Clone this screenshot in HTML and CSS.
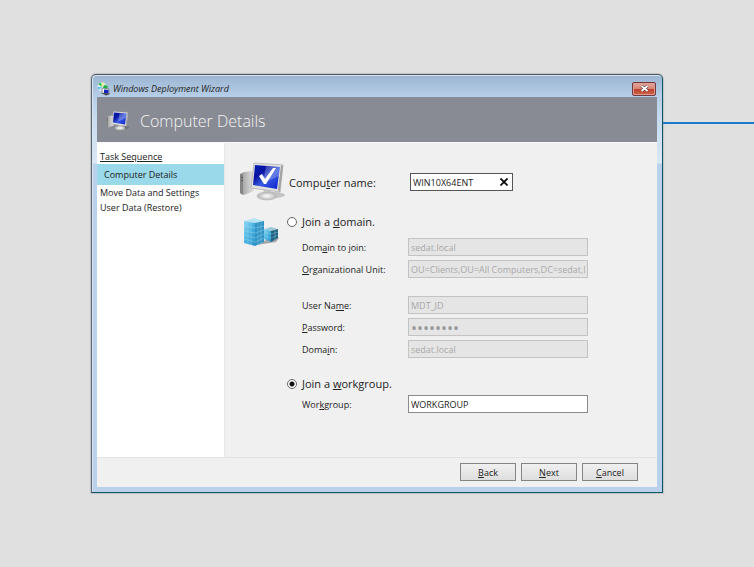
FILE: index.html
```html
<!DOCTYPE html>
<html lang="en">
    <head>
        <meta charset="UTF-8">
        <meta name="viewport" content="width=device-width, initial-scale=1.0">
        <title>Windows Deployment Wizard</title>
        <link rel="stylesheet" href="styles.css">
    </head>
    <body>
        <!-- Shared icon artwork -->
        <svg class="defs" width="0" height="0" aria-hidden="true">
            <defs>
                <linearGradient id="screen" x1="0" y1="0" x2="1" y2="1">
                    <stop offset="0" stop-color="#0a22b8"/>
                    <stop offset="0.3" stop-color="#0713a0"/>
                    <stop offset="0.55" stop-color="#3a5be0"/>
                    <stop offset="1" stop-color="#0a1fd0"/>
                </linearGradient>
                <linearGradient id="tower" x1="0" y1="0" x2="1" y2="0">
                    <stop offset="0" stop-color="#8f8f8f"/>
                    <stop offset="0.35" stop-color="#b4b4b4"/>
                    <stop offset="1" stop-color="#e2e2e2"/>
                </linearGradient>
                <radialGradient id="base">
                    <stop offset="0" stop-color="#ffffff"/>
                    <stop offset="1" stop-color="#b4b4b4"/>
                </radialGradient>
                <linearGradient id="glass" x1="0" y1="0" x2="1" y2="1">
                    <stop offset="0" stop-color="#8fd8f2"/>
                    <stop offset="0.5" stop-color="#47b1e0"/>
                    <stop offset="1" stop-color="#2a93c9"/>
                </linearGradient>
                <symbol id="computer" viewBox="0 0 46 40">
                    <ellipse cx="34" cy="33" rx="11" ry="3" fill="#000" opacity="0.18"/>
                    <path d="M0 12 L4 10 L14 9 V29 L4 33 L0 31 Z" fill="url(#tower)"/>
                    <path d="M0 12 L3 12 V33 L0 31 Z" fill="#858585"/>
                    <path d="M1 15 L3 16 M1 18 L3 19" stroke="#555" stroke-width="1"/>
                    <path d="M24 27 H31 L32 33 H23 Z" fill="#c9c9c9"/>
                    <ellipse cx="27" cy="34" rx="10" ry="4" fill="url(#base)" stroke="#b5b5b5" stroke-width="0.5"/>
                    <path d="M14 1 L43 3 L40 30 L11 26 Z" fill="#e2e2e2" stroke="#a8a8a8" stroke-width="0.7"/>
                    <path d="M41 4 L43 3 L40 30 L38 28 Z" fill="#a2a2a2"/>
                    <path d="M15 3 L40 5 L37 27 L13 23 Z" fill="url(#screen)"/>
                    <path d="M26 4 L40 5 L39 14 L23 21 Z" fill="#fff" opacity="0.22"/>
                </symbol>
            </defs>
        </svg>

        <div class="desktop">
            <main class="window">
                <header class="titlebar">
                    <svg class="app-icon" viewBox="0 0 14 14" aria-hidden="true">
                        <circle cx="5" cy="5" r="4.5" fill="#dcecf2"/>
                        <path d="M5 5 L1 2 L4 0.5 Z" fill="#31c94c"/>
                        <path d="M5 5 L5 0.5 L8 1.5 Z" fill="#f3f08a"/>
                        <path d="M5 5 L0.5 5 L1.5 8 Z" fill="#5bbfe8"/>
                        <path d="M7 3 L11 4 L10 7 L6 6 Z" fill="#22b244"/>
                        <path d="M5 6 L12 7 L12 12 L5 11 Z" fill="#f3f3f3" stroke="#555" stroke-width="0.6"/>
                        <path d="M7 7.5 L11.5 8 V11.5 L7 11 Z" fill="#1226bd"/>
                        <path d="M4 11 L9 13.5 L13 12 L12 11.5 Z" fill="#444"/>
                    </svg>
                    <span class="title">Windows Deployment Wizard</span>
                    <button class="close" type="button" aria-label="Close">
                        <svg viewBox="0 0 9 7" aria-hidden="true">
                            <path d="M1.5 1 L7.5 6 M7.5 1 L1.5 6" stroke="#5d3c40" stroke-width="3"/>
                            <path d="M1.5 1 L7.5 6 M7.5 1 L1.5 6" stroke="#fff" stroke-width="1.8"/>
                        </svg>
                    </button>
                </header>

                <div class="banner">
                    <svg class="banner-icon" aria-hidden="true"><use href="#computer"/></svg>
                    <h1>Computer Details</h1>
                </div>

                <div class="content">
                    <nav class="steps">
                        <a class="visited" href="#">Task Sequence</a>
                        <span class="current">Computer Details</span>
                        <span>Move Data and Settings</span>
                        <span>User Data (Restore)</span>
                    </nav>

                    <form class="pane" id="details">
                        <section class="computer">
                            <svg class="big-icon" viewBox="0 0 46 40" aria-hidden="true">
                                <use href="#computer"/>
                                <path d="M19 14 L22 12 L25 17 L33 6 L36 6 L26 22 L24 22 Z" fill="#fff"/>
                            </svg>
                            <label class="big" for="computerName">Compu<u>t</u>er name:</label>
                            <div class="name-box">
                                <input type="text" id="computerName" value="WIN10X64ENT">
                                <button type="button" aria-label="Clear">
                                    <svg viewBox="0 0 8 8" aria-hidden="true">
                                        <path d="M0.5 0.5 L7.5 7.5 M7.5 0.5 L0.5 7.5" stroke="#000" stroke-width="1.7"/>
                                    </svg>
                                </button>
                            </div>
                        </section>

                        <section class="join">
                            <svg class="domain-icon" viewBox="0 0 36 30" aria-hidden="true">
                                <path d="M14 27 L33 24 L36 20 L30 18 Z" fill="#000" opacity="0.3"/>
                                <path d="M1 3 L11 0 L21 3 L12 5 Z" fill="#b7e4f3"/>
                                <path d="M1 3 L12 5 V28 L1 25 Z" fill="url(#glass)"/>
                                <path d="M12 5 L21 3 V24 L12 28 Z" fill="#2e93c4"/>
                                <path d="M1 8 L12 10 L21 8 M1 13 L12 15 L21 12 M1 17 L12 20 L21 16 M1 21 L12 24 L21 20 M5 4 V26 M8 4 V27 M15 4 V27 M18 4 V26" fill="none" stroke="#a5dcf0" stroke-width="0.4"/>
                                <path d="M21 11 L28 9 L35 11 L28 13 Z" fill="#9cc9d8"/>
                                <path d="M21 11 L28 13 V24 L21 21 Z" fill="url(#glass)"/>
                                <path d="M28 13 L35 11 V20 L28 24 Z" fill="#21617f"/>
                                <path d="M21 14 L28 16 L35 14 M21 18 L28 20 L35 17 M24 12 V22 M32 12 V22" fill="none" stroke="#91d4ec" stroke-width="0.4"/>
                            </svg>
                            <div class="group">
                                <div class="choice">
                                    <input type="radio" name="join" id="joinDomain">
                                    <label class="big" for="joinDomain">Join a <u>d</u>omain.</label>
                                </div>
                                <div class="fields">
                                    <label for="domainToJoin">Dom<u>a</u>in to join:</label>
                                    <input type="text" id="domainToJoin" value="sedat.local" disabled>
                                    <label for="orgUnit"><u>O</u>rganizational Unit:</label>
                                    <input type="text" id="orgUnit" value="OU=Clients,OU=All Computers,DC=sedat,DC=local" disabled>
                                </div>
                                <div class="fields account">
                                    <label for="userName">User Na<u>m</u>e:</label>
                                    <input type="text" id="userName" value="MDT_JD" disabled>
                                    <label for="password"><u>P</u>assword:</label>
                                    <input type="password" id="password" value="password" disabled>
                                    <label for="domain">Doma<u>i</u>n:</label>
                                    <input type="text" id="domain" value="sedat.local" disabled>
                                </div>
                                <div class="choice workgroup">
                                    <input type="radio" name="join" id="joinWorkgroup" checked>
                                    <label class="big" for="joinWorkgroup">Join a <u>w</u>orkgroup.</label>
                                </div>
                                <div class="fields last">
                                    <label for="workgroup">Wor<u>k</u>group:</label>
                                    <input type="text" id="workgroup" value="WORKGROUP">
                                </div>
                            </div>
                        </section>
                    </form>
                </div>

                <footer class="buttons">
                    <button type="button"><u>B</u>ack</button>
                    <button type="button"><u>N</u>ext</button>
                    <button type="button"><u>C</u>ancel</button>
                </footer>
            </main>
            <div class="line"></div>
        </div>
    </body>
</html>
```

FILE: styles.css
```css
* {
    box-sizing: border-box;
}
body {
    margin: 0;
    background: #e0e0e0;
    color: #222;
    font-family: "Open Sans", "Noto Sans", sans-serif;
    font-size: 9px;
    line-height: 14px;
}
input, button {
    font: inherit;
    color: inherit;
}
u {
    text-underline-offset: 1px;
}
.defs {
    position: absolute;
}

.desktop {
    display: grid;
    grid-template-columns: 1fr 91px;
    min-height: 100vh;
    padding: 74px 0 74px 91px;
}
.line {
    height: 2px;
    margin-top: 48px;
    background: #1a7acb;
}

/* Window frame */
.window {
    display: flex;
    flex-direction: column;
    padding: 0 5px 5px;
    border: 1px solid #0c5566;
    border-top-color: #4c565c;
    border-left-color: #5b6670;
    border-radius: 5px 5px 0 0;
    background: linear-gradient(#a6bfda 0, #c6daef 40px, #dae8f6 88px, #b9d1ea 89px);
    box-shadow: inset 1px 1px 0 #d5e5f3, 0 0 1px 1px #c4c4c4;
}
.titlebar {
    display: flex;
    align-items: center;
    height: 21px;
    margin: 1px -4px 0;
    padding: 4px 4px 0;
    background: linear-gradient(#9cb6d2, #b7cfe8);
    border-radius: 4px 4px 0 0;
}
.app-icon {
    width: 14px;
    height: 14px;
    margin-right: 2px;
}
.title {
    flex: 1;
    font-style: italic;
}
.close {
    display: flex;
    align-items: center;
    justify-content: center;
    width: 24px;
    height: 14px;
    margin-right: 1px;
    padding: 0;
    border: 1px solid #75393f;
    border-radius: 2px;
    background: linear-gradient(#e5a79c 0%, #d6877a 48%, #bd3e28 52%, #cf6a50 100%);
    box-shadow: inset 0 0 0 1px #dd9c90;
}
.close svg {
    width: 9px;
    height: 7px;
}

.banner {
    display: flex;
    align-items: center;
    gap: 10px;
    height: 45px;
    padding: 2px 0 0 9px;
    background: #888b93;
    color: #f4f4f4;
}
.banner-icon {
    width: 24px;
    height: 20px;
}
h1 {
    margin: 0;
    font-size: 16px;
    font-weight: 300;
    line-height: 24px;
}

.content {
    display: flex;
    flex: 1;
    border-top: 1px solid #fafafa;
}
.steps {
    display: flex;
    flex-direction: column;
    width: 128px;
    padding-top: 6px;
    border-right: 1px solid #e6e6e6;
    background: #fff;
}
.steps > * {
    padding: 0 3px;
    line-height: 15px;
}
.steps .visited {
    color: inherit;
}
.steps .current {
    padding: 0 7px;
    background: #99d9ea;
    line-height: 21px;
}

/* Form */
.pane {
    flex: 1;
    padding: 19px 15px;
    background: #f0f0f0;
}
.big {
    font-size: 11px;
    line-height: 18px;
}
.computer {
    display: flex;
    align-items: center;
    height: 40px;
}
.computer .big {
    width: 121px;
    padding-top: 2px;
}
.big-icon {
    width: 46px;
    height: 40px;
    margin-right: 3px;
}
.name-box {
    display: flex;
    width: 103px;
    height: 18px;
    border: 1px solid #555;
    background: #fff;
}
.name-box input {
    flex: 1;
    min-width: 0;
    padding: 1px 2px 0;
    border: 0;
    background: none;
    outline: 0;
}
.name-box button {
    width: 16px;
    padding: 0 4px;
    border: 0;
    background: none;
}
.name-box svg {
    display: block;
    width: 8px;
    height: 8px;
}

.join {
    display: flex;
    margin-top: 11px;
}
.domain-icon {
    width: 36px;
    height: 30px;
    margin: 5px 8px 0 3px;
}
.choice {
    display: flex;
    align-items: center;
    gap: 5px;
    height: 18px;
}
.choice input {
    appearance: none;
    width: 10px;
    height: 10px;
    margin: 0;
    border: 1px solid #666;
    border-radius: 50%;
    background: #fff;
}
.choice input:checked {
    background: radial-gradient(#111 0 2px, #fff 3px);
}
.fields {
    display: grid;
    grid-template-columns: 106px 180px;
    row-gap: 4px;
    align-items: center;
    margin: 7px 0 0 15px;
}
.fields label {
    padding-top: 2px;
}
.fields input {
    height: 18px;
    padding: 1px 2px 0;
    border: 1px solid #8a8a8a;
    background: #fff;
}
.fields input:disabled {
    border-color: #c3c3c3;
    background: #e5e5e5;
    color: #a9a9a9;
}
.fields input[type="password"] {
    color: #999;
    font-size: 16px;
}
.account {
    margin-top: 18px;
}
.workgroup {
    margin-top: 17px;
}
.last {
    margin-top: 2px;
}

.buttons {
    display: flex;
    justify-content: flex-end;
    gap: 5px;
    height: 30px;
    padding: 5px 19px 0 0;
    border-top: 1px solid #e2e2e2;
    background: #f0f0f0;
}
.buttons button {
    width: 56px;
    height: 18px;
    padding: 1px 0 0;
    border: 1px solid #858585;
    background: linear-gradient(#f0f0f0, #dedede);
}
```
